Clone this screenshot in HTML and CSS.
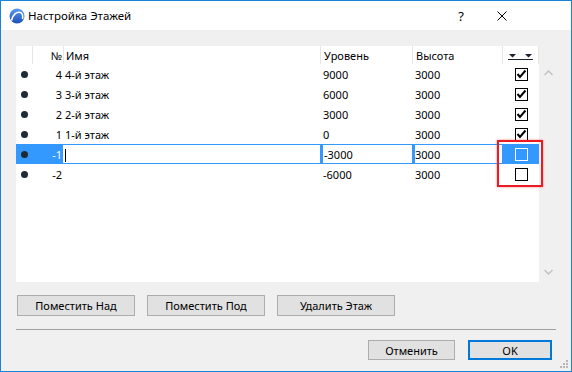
FILE: index.html
```html
<!DOCTYPE html>
<html lang="ru">
<head>
    <meta charset="UTF-8">
    <title>Настройка Этажей</title>
    <link rel="stylesheet" href="styles.css">
</head>
<body>
    <div class="dialog">
        <div class="titlebar">
            <svg class="app-icon" width="16" height="16" viewBox="0 0 16 16">
                <defs>
                    <linearGradient id="g" x1="0" y1="0" x2="0" y2="1">
                        <stop offset="0" stop-color="#5b9bef"/>
                        <stop offset="1" stop-color="#1d4fb8"/>
                    </linearGradient>
                </defs>
                <circle cx="8" cy="8" r="7.5" fill="url(#g)"/>
                <path d="M2.5 12.5 C4 6 8 3.5 11.5 4.5 C13.5 5.2 14 8 13.6 11" fill="none" stroke="#fff" stroke-width="1.6"/>
            </svg>
            <span class="title">Настройка Этажей</span>
            <span class="tb-btn help">?</span>
            <span class="tb-btn close">
                <svg width="10" height="10" viewBox="0 0 10 10"><path d="M0.5 0.5 L9.5 9.5 M9.5 0.5 L0.5 9.5" stroke="#000" stroke-width="1"/></svg>
            </span>
        </div>

        <div class="content">
            <div class="list-row">
                <div class="list">
                    <table class="stories">
                        <colgroup>
                            <col style="width:16px">
                            <col style="width:31px">
                            <col style="width:257px">
                            <col style="width:92px">
                            <col style="width:90px">
                            <col style="width:37px">
                        </colgroup>
                        <thead>
                            <tr>
                                <th></th>
                                <th class="num">№</th>
                                <th class="name">Имя</th>
                                <th class="level">Уровень</th>
                                <th class="height">Высота</th>
                                <th class="check">
                                    <svg width="25" height="8" viewBox="0 0 25 8">
                                        <path d="M1 1 H8 L4.5 4.5 Z M17 1 H24 L20.5 4.5 Z" fill="#1c2430"/>
                                        <path d="M0 6.5 H25" stroke="#1c2430" stroke-width="1"/>
                                    </svg>
                                </th>
                            </tr>
                        </thead>
                        <tbody>
                            <tr>
                                <td><span class="dot"></span></td>
                                <td class="num">4</td>
                                <td class="name">4-й этаж</td>
                                <td class="level">9000</td>
                                <td class="height">3000</td>
                                <td class="check"><span class="box on"></span></td>
                            </tr>
                            <tr>
                                <td><span class="dot"></span></td>
                                <td class="num">3</td>
                                <td class="name">3-й этаж</td>
                                <td class="level">6000</td>
                                <td class="height">3000</td>
                                <td class="check"><span class="box on"></span></td>
                            </tr>
                            <tr>
                                <td><span class="dot"></span></td>
                                <td class="num">2</td>
                                <td class="name">2-й этаж</td>
                                <td class="level">3000</td>
                                <td class="height">3000</td>
                                <td class="check"><span class="box on"></span></td>
                            </tr>
                            <tr>
                                <td><span class="dot"></span></td>
                                <td class="num">1</td>
                                <td class="name">1-й этаж</td>
                                <td class="level">0</td>
                                <td class="height">3000</td>
                                <td class="check"><span class="box on"></span></td>
                            </tr>
                            <tr class="editing">
                                <td class="sel"><span class="dot"></span></td>
                                <td class="num sel">-1</td>
                                <td class="name"><span class="caret"></span></td>
                                <td class="level">-3000</td>
                                <td class="height">3000</td>
                                <td class="check sel"><span class="box"></span></td>
                            </tr>
                            <tr>
                                <td><span class="dot"></span></td>
                                <td class="num">-2</td>
                                <td class="name"></td>
                                <td class="level">-6000</td>
                                <td class="height">3000</td>
                                <td class="check"><span class="box"></span></td>
                            </tr>
                        </tbody>
                    </table>
                    <div class="highlight"></div>
                </div>
                <div class="scrollbar">
                    <svg width="9" height="6" viewBox="0 0 9 6"><path d="M0.5 5 L4.5 1 L8.5 5" fill="none" stroke="#c2c2c2" stroke-width="1.5"/></svg>
                    <svg width="9" height="6" viewBox="0 0 9 6"><path d="M0.5 1 L4.5 5 L8.5 1" fill="none" stroke="#c2c2c2" stroke-width="1.5"/></svg>
                </div>
            </div>

            <div class="actions">
                <button class="btn wide">Поместить Над</button>
                <button class="btn wide">Поместить Под</button>
                <button class="btn wide">Удалить Этаж</button>
            </div>

            <div class="separator"></div>

            <div class="footer">
                <button class="btn cancel">Отменить</button>
                <button class="btn ok">OK</button>
            </div>
        </div>

        <svg class="grip" width="9" height="9" viewBox="0 0 9 9">
            <g fill="#b8b8b8">
                <rect x="6" y="0" width="2" height="2"/>
                <rect x="3" y="3" width="2" height="2"/>
                <rect x="6" y="3" width="2" height="2"/>
                <rect x="0" y="6" width="2" height="2"/>
                <rect x="3" y="6" width="2" height="2"/>
                <rect x="6" y="6" width="2" height="2"/>
            </g>
        </svg>
    </div>
</body>
</html>
```

FILE: styles.css
```css
* {
    box-sizing: border-box;
}
body {
    margin: 0;
    font-family: "Noto Sans", sans-serif;
    font-size: 11px;
    color: #000;
    background: #fff;
}
.dialog {
    position: relative;
    width: 572px;
    height: 372px;
    border: 1px solid #1883d7;
    background: #f0f0f0;
    display: flex;
    flex-direction: column;
}
.titlebar {
    height: 29px;
    background: #fff;
    display: flex;
    align-items: center;
    padding-left: 8px;
}
.app-icon {
    margin-right: 3px;
}
.title {
    flex: 1;
    font-size: 11.5px;
}
.tb-btn {
    display: flex;
    align-items: center;
    justify-content: center;
}
.help {
    width: 12px;
    margin-right: 30px;
    font-size: 13px;
}
.close {
    width: 10px;
    margin-right: 64px;
}
.content {
    padding: 16px 15px 0 15px;
    display: flex;
    flex-direction: column;
}
.list-row {
    display: flex;
    height: 236px;
}
.list {
    position: relative;
    width: 523px;
    background: #fff;
}
.scrollbar {
    width: 17px;
    display: flex;
    flex-direction: column;
    align-items: center;
    justify-content: space-between;
    padding: 24px 0 7px 1px;
}
.stories {
    table-layout: fixed;
    width: 523px;
    border-spacing: 0;
}
.stories th {
    height: 18px;
    padding: 0;
    font-weight: normal;
    text-align: left;
    border-left: 1px solid #e6e6e6;
    white-space: nowrap;
}
.stories th:first-child {
    border-left: none;
}
.stories th.check {
    border-right: 1px solid #e6e6e6;
    text-align: center;
    line-height: 0;
    padding-top: 3px;
}
.stories td {
    height: 20px;
    padding: 0;
    white-space: nowrap;
    border-top: 1px solid transparent;
    border-bottom: 1px solid transparent;
}
.stories .num {
    text-align: right;
    padding-right: 1px;
}
.stories .name {
    padding-left: 2px;
}
.stories .level,
.stories .height {
    padding-left: 3px;
}
.stories td.check {
    text-align: center;
    line-height: 0;
}
.dot {
    display: block;
    width: 7px;
    height: 7px;
    margin-left: 5px;
    border-radius: 50%;
    background: #1e2a35;
}
.box {
    display: inline-block;
    width: 13px;
    height: 13px;
    margin-left: 2px;
    border: 1px solid #000;
    background: #fff;
}
.box.on {
    background: #fff url("data:image/svg+xml,%3Csvg xmlns='http://www.w3.org/2000/svg' width='11' height='11'%3E%3Cpath d='M1.5 5 L4 8 L9.5 1.5' fill='none' stroke='%23000' stroke-width='2'/%3E%3C/svg%3E") no-repeat center;
}
.editing td {
    border-top-color: #3399ff;
    border-bottom-color: #3399ff;
}
.editing td.sel {
    background: #3399ff;
    color: #fff;
}
.editing td.level,
.editing td.height {
    border-left: 3px solid #3399ff;
    padding-left: 0;
}
.editing td.level {
    padding-left: 1px;
}
.editing .box {
    background: transparent;
    border-color: #fff;
}
.caret {
    display: inline-block;
    width: 1px;
    height: 13px;
    background: #000;
    vertical-align: middle;
}
.highlight {
    position: absolute;
    left: 481px;
    top: 94px;
    width: 46px;
    height: 47px;
    border: 2px solid #ea1b22;
    box-shadow: 0 0 2px rgba(255, 40, 40, 0.6);
}
.actions {
    display: flex;
    gap: 12px;
    margin-top: 13px;
    padding-left: 1px;
}
.btn {
    font-family: inherit;
    font-size: 11px;
    color: #000;
    background: #e1e1e1;
    border: 1px solid #adadad;
    padding: 0;
    height: 21px;
}
.btn.wide {
    width: 118px;
}
.separator {
    height: 1px;
    background: #a0a0a0;
    margin-top: 13px;
}
.footer {
    display: flex;
    justify-content: flex-end;
    gap: 13px;
    margin-top: 10px;
    padding-right: 4px;
}
.footer .btn {
    height: 20px;
}
.cancel {
    width: 87px;
}
.ok {
    width: 84px;
    border: 2px solid #0078d7;
}
.grip {
    position: absolute;
    right: 2px;
    bottom: 2px;
}
```
